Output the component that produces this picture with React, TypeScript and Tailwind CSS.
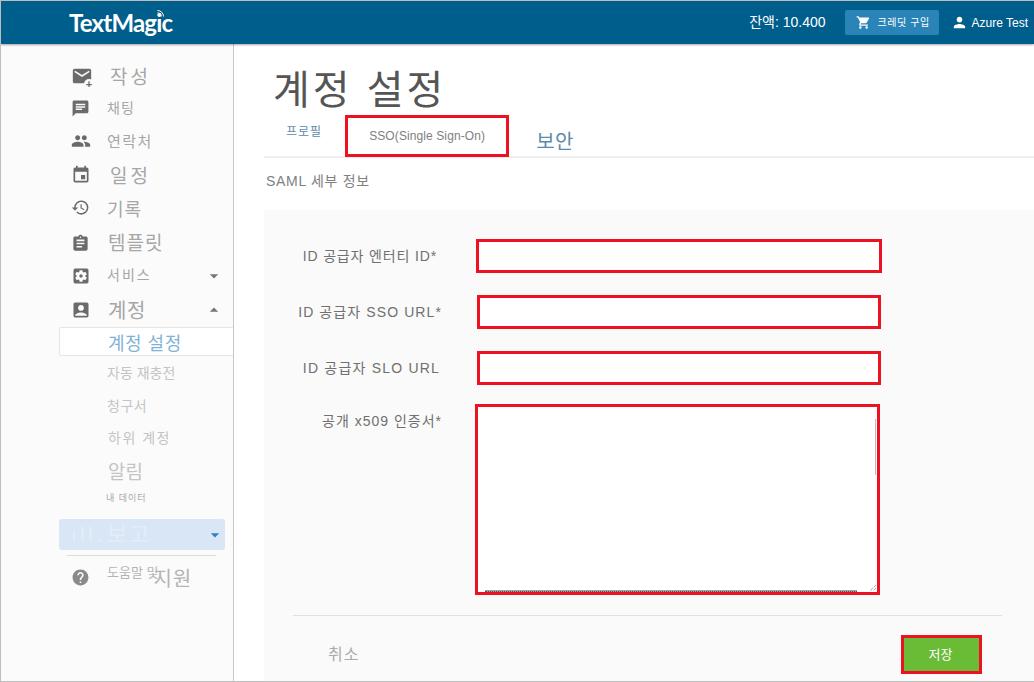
import React from 'react';
import {
  MdAccountBox,
  MdAssignment,
  MdArrowDropDown,
  MdArrowDropUp,
  MdChat,
  MdEmail,
  MdEvent,
  MdHelp,
  MdHistory,
  MdPeople,
  MdPerson,
  MdSettingsApplications,
  MdShoppingCart,
} from 'react-icons/md';

const font = "font-['Liberation_Sans','Noto_Sans_CJK_KR',sans-serif]";

const NavRow: React.FC<{
  icon?: React.ReactNode;
  label: string;
  className: string;
  rowClass: string;
  caret?: 'up' | 'down';
}> = ({ icon, label, className, rowClass, caret }) => (
  <div className={`flex items-center pl-[70px] pr-[7px] ${rowClass}`}>
    <div className="w-[36px] shrink-0 text-[#6b6b6b]">{icon}</div>
    <span className={`whitespace-nowrap ${className}`}>{label}</span>
    {caret === 'down' && <MdArrowDropDown className="ml-auto mr-[2px] h-[20px] w-[20px] text-[#757575]" />}
    {caret === 'up' && <MdArrowDropUp className="ml-auto mr-[2px] h-[20px] w-[20px] text-[#757575]" />}
  </div>
);

const Sidebar: React.FC = () => (
  <aside className="w-[233px] shrink-0 border-r border-[#c8c8c8] bg-[#fbfbfb] pt-[16px]">
    <NavRow
      rowClass="h-[32px]"
      className="mt-[4px] pl-[3px] text-[19px] tracking-[3px] text-[#a6a6a6]"
      label="작성"
      icon={
        <span className="relative block h-[20px] w-[20px]">
          <MdEmail className="absolute left-0 -top-[1px] h-[22px] w-[22px]" />
          <span className="absolute -bottom-[3px] -right-[3px] h-[10px] w-[10px] rounded-full bg-[#fbfbfb] text-center text-[11px] font-bold leading-[10px]">+</span>
        </span>
      }
    />
    <NavRow rowClass="h-[32px]" className="text-[14px] tracking-[1px] text-[#a6a6a6]" label="채팅" icon={<MdChat className="h-[19px] w-[19px]" />} />
    <NavRow rowClass="h-[33px]" className="mt-[4px] text-[15px] tracking-[1.5px] text-[#a6a6a6]" label="연락처" icon={<MdPeople className="h-[20px] w-[20px]" />} />
    <NavRow rowClass="h-[36px]" className="mt-[4px] pl-[3px] text-[19px] tracking-[3px] text-[#a6a6a6]" label="일정" icon={<MdEvent className="h-[20px] w-[20px]" />} />
    <NavRow rowClass="h-[33px]" className="mt-[2px] text-[18px] tracking-[1px] text-[#a6a6a6]" label="기록" icon={<MdHistory className="h-[19px] w-[19px] -translate-y-[2px]" />} />
    <NavRow rowClass="h-[34px]" className="mt-[2px] pl-[1px] text-[19px] tracking-[1px] text-[#a6a6a6]" label="템플릿" icon={<MdAssignment className="h-[19px] w-[19px]" />} />
    <NavRow rowClass="h-[32px]" className="mb-[2px] text-[14px] tracking-[2px] text-[#a6a6a6]" label="서비스" caret="down" icon={<MdSettingsApplications className="h-[20px] w-[20px]" />} />
    <NavRow rowClass="h-[35px]" className="mt-[2px] pl-[1px] text-[20px] tracking-[0.5px] text-[#a6a6a6]" label="계정" caret="up" icon={<MdAccountBox className="h-[20px] w-[20px]" />} />
    <div className="ml-[58px] flex h-[29px] items-center rounded-l-[2px] border-y border-l border-[#e6e6e6] bg-white pl-[48px] pt-[6px] text-[18px] tracking-[0.5px] text-[#7fb3d5]">
      계정 설정
    </div>
    <div className="flex h-[34px] items-center pl-[106px] text-[14px] text-[#c4c4c4]">자동 재충전</div>
    <div className="flex h-[32px] items-center pl-[106px] text-[14px] tracking-[0.5px] text-[#c4c4c4]">청구서</div>
    <div className="flex h-[32px] items-center pl-[107px] text-[14px] tracking-[1.5px] text-[#c4c4c4]">하위 계정</div>
    <div className="flex h-[38px] items-center pl-[107px] text-[19px] text-[#c4c4c4]">알림</div>
    <div className="flex h-[14px] items-center pl-[105px] text-[9px] tracking-[1px] text-[#a8a8a8]">내 데이터</div>
    <div className="ml-[58px] mr-[8px] mt-[13px] flex h-[31px] items-center rounded-[3px] bg-[#d8e6f5] pl-[12px] text-[22px] text-[#e3edf8]">
      <span className="w-[36px] shrink-0 tracking-[3px]">ıll.</span>
      <span className="tracking-[2px]">보고</span>
      <MdArrowDropDown className="ml-auto h-[20px] w-[20px] text-[#2f80bd]" />
    </div>
    <div className="ml-[66px] mr-[17px] mt-[5px] border-t border-[#dcdcdc]" />
    <div className="flex h-[42px] items-center pl-[70px]">
      <MdHelp className="h-[19px] w-[19px] text-[#8a8a8a]" />
      <span className="ml-[17px] -translate-y-[4px] whitespace-nowrap text-[13px] text-[#b4b4b4]">도움말 및</span>
      <span className="-ml-[5px] mt-[4px] whitespace-nowrap text-[20px] tracking-[1px] text-[#b4b4b4]">지원</span>
    </div>
  </aside>
);

const fields = [
  { label: 'ID 공급자 엔터티 ID*', box: 'ml-[34px] w-[406px]', top: 'mt-[29px]', pad: 'pr-[5px] tracking-[0.85px]' },
  { label: 'ID 공급자 SSO URL*', box: 'ml-[35px] w-[404px]', top: 'mt-[22px]', pad: 'tracking-[1.1px]' },
  { label: 'ID 공급자 SLO URL', box: 'ml-[35px] w-[404px]', top: 'mt-[22px]', pad: 'pr-[2px] tracking-[1.2px]' },
];

const App: React.FC = () => (
  <div className={`flex h-[682px] w-[1034px] flex-col overflow-hidden border border-r-0 border-[#bdbdbd] bg-white ${font}`}>
    <header className="relative z-10 flex h-[43px] shrink-0 items-center bg-[#005e8c] shadow-[0_1px_2px_rgba(0,0,0,0.35)]">
      <div className="relative ml-[68px] font-['Lato',sans-serif] text-[24px] font-bold tracking-[-0.8px] text-white">
        TextMagic
        <svg viewBox="0 0 12 12" className="absolute right-[7px] top-[4px] h-[9px] w-[9px]" fill="none" stroke="white" strokeWidth="1.3">
          <path d="M2 2a8 8 0 0 1 8 8M2 5a5 5 0 0 1 5 5M2 8a2 2 0 0 1 2 2" />
        </svg>
      </div>
      <span className="ml-auto text-[14px] text-white">잔액: 10.400</span>
      <button className="ml-[19px] flex h-[25px] w-[94px] items-center rounded-[2px] bg-[#2a84b8] pl-[11px] text-[10px] tracking-[0.6px] text-white">
        <MdShoppingCart className="mr-[7px] h-[15px] w-[15px]" />
        크레딧 구입
      </button>
      <MdPerson className="ml-[12px] h-[17px] w-[17px] text-white" />
      <span className="ml-[4px] mr-[6px] text-[12px] text-white">Azure Test</span>
    </header>
    <div className="flex min-h-0 flex-1">
      <Sidebar />
      <main className="flex min-w-0 flex-1 flex-col pl-[30px]">
        <h1 className="ml-[9px] mt-[24px] h-[42px] text-[40px] leading-[44px] tracking-[3px] text-[#555555]">계정 설정</h1>
        <div className="flex h-[48px] items-end border-b-2 border-[#eeeeee]">
          <span className="mb-[15px] ml-[22px] text-[12px] tracking-[1px] text-[#5b8ba8]">프로필</span>
          <span className="relative top-[1px] ml-[23px] flex h-[42px] w-[164px] items-center justify-center border-[3px] border-[#ee1122] text-[12px] tracking-[0.1px] text-[#808080]">
            SSO(Single Sign-On)
          </span>
          <span className="-mb-[1px] ml-[27px] text-[20px] tracking-[0.5px] text-[#5b8ba8]">보안</span>
        </div>
        <div className="flex h-[52px] items-center pb-[5px] pl-[2px] text-[14px] tracking-[0.7px] text-[#808080]">SAML 세부 정보</div>
        <section className="flex-1 bg-[#fafafa]">
          {fields.map((f) => (
            <div key={f.label} className={`flex ${f.top}`}>
              <label className={`flex w-[178px] items-center justify-end whitespace-nowrap text-[14px] text-[#707070] ${f.pad}`}>{f.label}</label>
              <div className={`${f.box} h-[34px] border-[3px] border-[#ee1122] bg-white`} />
            </div>
          ))}
          <div className="mt-[19px] flex">
            <label className="w-[178px] pt-[7px] text-right text-[14px] tracking-[1px] text-[#707070]">공개 x509 인증서*</label>
            <div className="relative ml-[33px] h-[191px] w-[405px] border-[3px] border-[#ee1122] bg-white">
              <div className="absolute right-[1px] top-[12px] h-[56px] w-[1px] bg-[#bdbdbd]" />
              <div className="absolute bottom-0 left-[7px] right-[20px] h-[2px] border-b border-dotted border-[#555555] bg-[#a0a0a0]" />
              <svg viewBox="0 0 8 8" className="absolute bottom-0 right-0 h-[8px] w-[8px]" stroke="#777777" strokeDasharray="1 1" fill="none">
                <path d="M7 1 1 7M7 4 4 7" />
              </svg>
            </div>
          </div>
          <div className="ml-[29px] mr-[32px] mt-[20px] border-t border-[#e0e0e0]" />
          <div className="ml-[64px] mr-[52px] mt-[19px] flex items-center justify-between">
            <span className="text-[16px] tracking-[1px] text-[#ababab]">취소</span>
            <button className="h-[39px] w-[81px] border-[3px] border-[#ee1122] bg-[#6abb35] pr-[2px] text-[13px] text-white">저장</button>
          </div>
        </section>
      </main>
    </div>
  </div>
);

export default App;
